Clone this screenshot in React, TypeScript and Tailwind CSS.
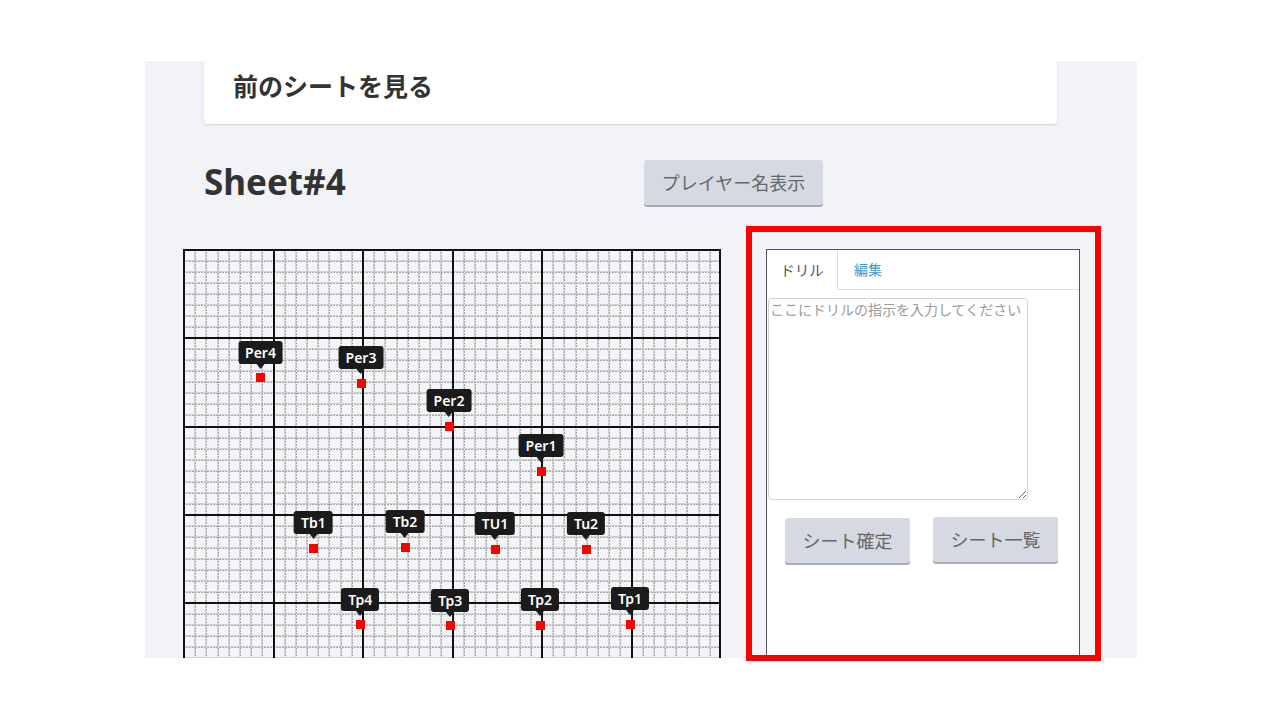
import React from "react";

const GW = 538;
const GH = 530;
const MX = 89.5;
const MY = 88.25;

const markers: { name: string; x: number; y: number }[] = [
  { name: "Per4", x: 77.5, y: 128.5 },
  { name: "Per3", x: 178, y: 134 },
  { name: "Per2", x: 266, y: 177 },
  { name: "Per1", x: 358, y: 222 },
  { name: "Tb1", x: 130.3, y: 299.2 },
  { name: "Tb2", x: 222, y: 298.2 },
  { name: "TU1", x: 312, y: 300 },
  { name: "Tu2", x: 403, y: 300 },
  { name: "Tp4", x: 177.3, y: 375.7 },
  { name: "Tp3", x: 267.3, y: 376.7 },
  { name: "Tp2", x: 357, y: 376.3 },
  { name: "Tp1", x: 447, y: 375.3 },
];

function Grid() {
  const minorV: number[] = [];
  const minorH: number[] = [];
  const majorV: number[] = [];
  const majorH: number[] = [];
  for (let i = 0; i * (MX / 8) <= GW + 0.1; i++) {
    const x = i * (MX / 8);
    if (i % 8 === 0) majorV.push(x);
    else minorV.push(x);
  }
  for (let i = 0; i * (MY / 8) <= GH + 0.1; i++) {
    const y = i * (MY / 8);
    if (i % 8 === 0) majorH.push(y);
    else minorH.push(y);
  }
  return (
    <svg width={GW} height={GH} className="block" shapeRendering="crispEdges">
      <rect x={0} y={0} width={GW} height={GH} fill="#f4f5f8" />
      {minorV.map((x) => (
        <g key={"mv" + x}>
          <line x1={Math.round(x) + 0.5} y1={0} x2={Math.round(x) + 0.5} y2={GH} stroke="#d2d2d2" strokeWidth={1} />
          <line x1={Math.round(x) + 1.5} y1={0} x2={Math.round(x) + 1.5} y2={GH} stroke="#a8a8a8" strokeWidth={1} strokeDasharray="2 1" />
        </g>
      ))}
      {minorH.map((y) => (
        <g key={"mh" + y}>
          <line x1={0} y1={Math.round(y) + 0.5} x2={GW} y2={Math.round(y) + 0.5} stroke="#d2d2d2" strokeWidth={1} />
          <line x1={0} y1={Math.round(y) + 1.5} x2={GW} y2={Math.round(y) + 1.5} stroke="#a8a8a8" strokeWidth={1} strokeDasharray="2 1" />
        </g>
      ))}
      {majorV.map((x) => (
        <line key={"Mv" + x} x1={Math.min(Math.round(x) + 1, GW - 1)} y1={0} x2={Math.min(Math.round(x) + 1, GW - 1)} y2={GH} stroke="#111" strokeWidth={2} />
      ))}
      {majorH.map((y) => (
        <line key={"Mh" + y} x1={0} y1={Math.round(y) + 1} x2={GW} y2={Math.round(y) + 1} stroke="#111" strokeWidth={2} />
      ))}
    </svg>
  );
}

function Marker({ name, x, y }: { name: string; x: number; y: number }) {
  return (
    <div className="absolute" style={{ left: x, top: y }}>
      <div className="absolute left-0 top-[-37px] -translate-x-1/2 flex flex-col items-center">
        <div className="h-[23px] px-[7px] rounded-[3px] bg-[#1b1b1b] text-white text-[14px] font-semibold leading-[23px] whitespace-nowrap font-['Noto_Sans',sans-serif]">
          {name}
        </div>
        <div className="w-0 h-0 border-l-[4px] border-r-[4px] border-t-[5px] border-l-transparent border-r-transparent border-t-[#1b1b1b]" />
      </div>
      <div className="absolute left-[-4.5px] top-[-4.5px] w-[9px] h-[9px] bg-[#ff0000]" />
    </div>
  );
}

export default function App() {
  const jp = "font-['Noto_Sans','Noto_Sans_CJK_JP',sans-serif]";
  return (
    <div className={"relative w-[1280px] h-[720px] bg-white overflow-hidden " + jp}>
      <div className="ml-[145px] mt-[61px] w-[992px] h-[597px] bg-[#f2f3f7] overflow-hidden">
        <div className="ml-[59px] w-[853px] h-[63px] bg-white rounded-b-[3px] shadow-[0_1px_2px_rgba(0,0,0,0.15)] pl-[29px] pt-[10px]">
          <span className="block text-[25px] font-bold text-[#333] leading-[28px] font-['Noto_Sans_CJK_JP',sans-serif]">前のシートを見る</span>
        </div>
        <div className="mt-[36px] h-[45px] flex items-center">
          <div className="ml-[59px] w-[440px]">
            <span className="text-[35px] font-bold text-[#333] leading-none">Sheet#4</span>
          </div>
          <button className="h-[45px] w-[179px] rounded-[3px] bg-[#d5dae2] text-[#666] text-[18px] shadow-[0_2px_0_#a5adba] font-['Noto_Sans_CJK_JP',sans-serif]">
            プレイヤー名表示
          </button>
        </div>
        <div className="mt-[44px] flex items-start">
          <div className="relative ml-[38px] w-[538px] shrink-0">
            <Grid />
            {markers.map((m) => (
              <Marker key={m.name} {...m} />
            ))}
          </div>
          <div className="ml-[45px] w-[314px] h-[420px] shrink-0 bg-white border border-[#555] border-b-0 font-['Noto_Sans_CJK_JP',sans-serif]">
            <div className="flex h-[40px]">
              <div className="w-[71px] h-[40px] border-r border-[#ddd] flex items-center justify-center text-[14.5px] text-[#555]">ドリル</div>
              <div className="flex-1 h-[40px] border-b border-[#ddd] flex items-center pl-[16px] text-[14px] text-[#3a9bd0]">編集</div>
            </div>
            <div className="pl-[1px] pt-[8px]">
              <textarea
                className="block w-[260px] h-[202px] border border-[#d3d3d3] rounded-[4px] px-[1px] py-[0px] text-[14px] leading-[20px] text-[#333] placeholder:text-[#9a9a9a] bg-white outline-none"
                placeholder="ここにドリルの指示を入力してください"
              />
            </div>
            <div className="flex items-start pl-[18px] pt-[17px] gap-[23px]">
              <button className="h-[45px] w-[125px] rounded-[3px] bg-[#d5dae2] text-[#666] text-[18px] shadow-[0_2px_0_#a5adba] mt-[1px]">シート確定</button>
              <button className="h-[45px] w-[125px] rounded-[3px] bg-[#d5dae2] text-[#666] text-[18px] shadow-[0_2px_0_#a5adba]">シート一覧</button>
            </div>
          </div>
        </div>
      </div>
      <div className="absolute left-[746px] top-[226px] w-[355px] h-[435px] border-[6px] border-[#ff0000]" />
    </div>
  );
}
